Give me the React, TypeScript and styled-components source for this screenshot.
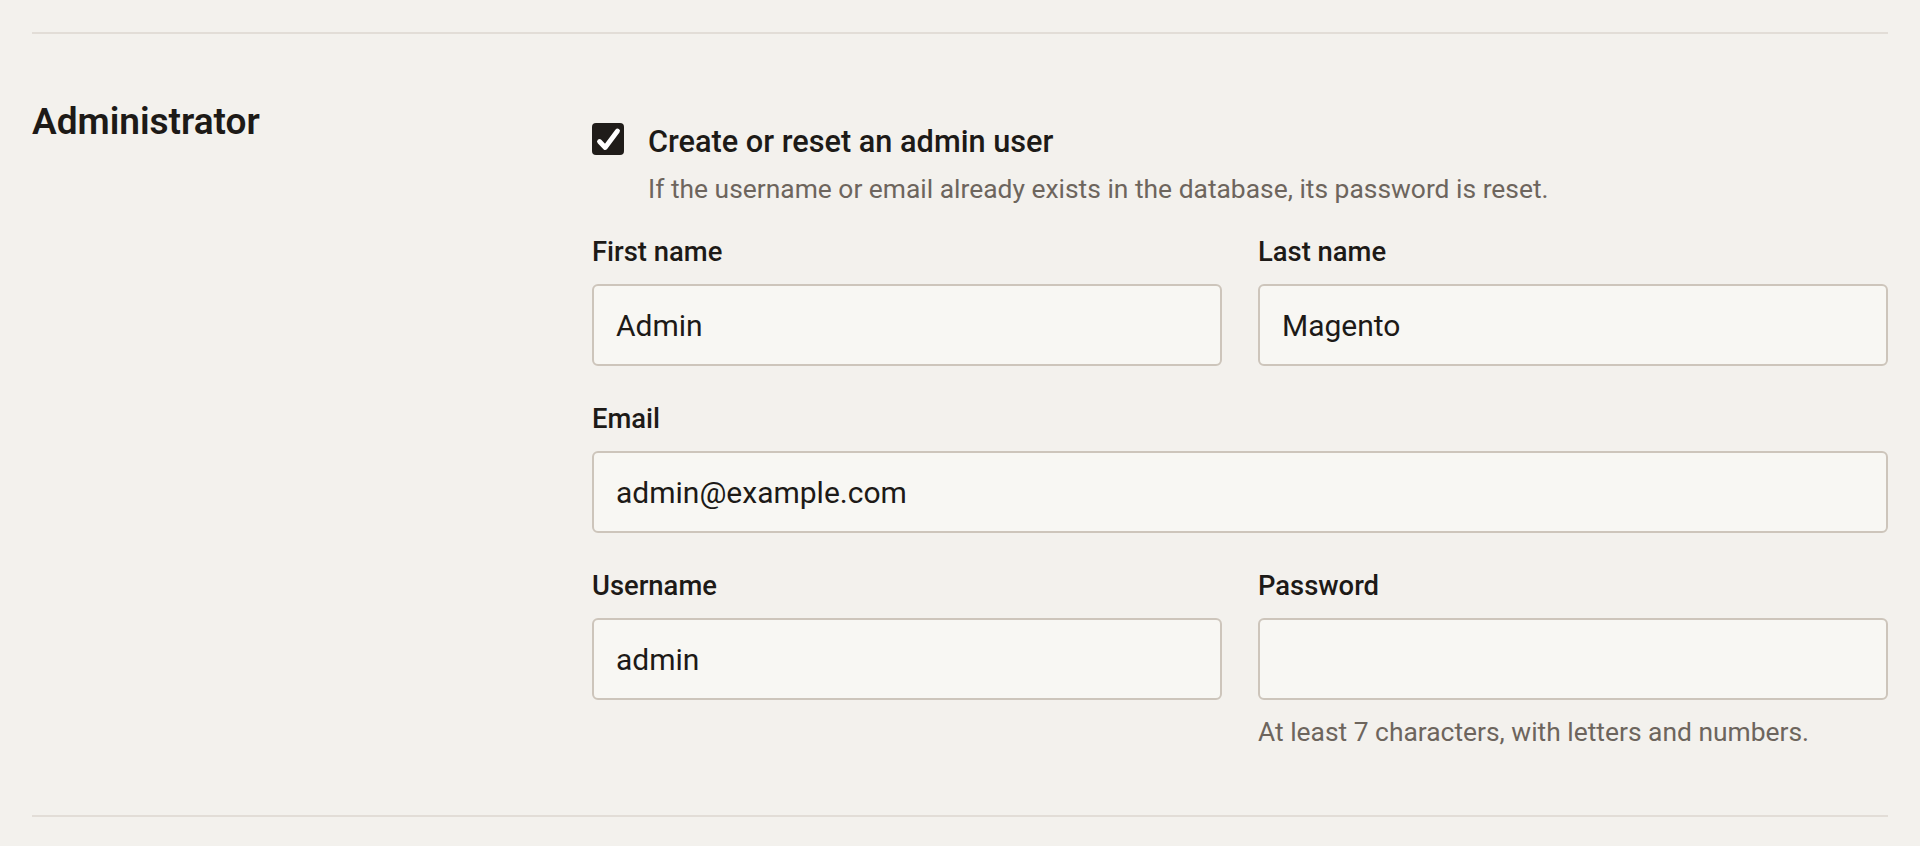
import React, { useState } from 'react'
import styled, { createGlobalStyle } from 'styled-components'

const GlobalStyle = createGlobalStyle`
  html, body {
    margin: 0;
    padding: 0;
    background: #f3f1ed;
  }
  body {
    font-family: Roboto, "Liberation Sans", sans-serif;
    color: #1d1a17;
  }
  * {
    box-sizing: border-box;
  }
`

const Page = styled.div`
  padding: 32px 32px 0;
`

const Divider = styled.hr`
  margin: 0;
  border: none;
  height: 2px;
  background: #e2ddd7;
`

const Section = styled.section`
  display: grid;
  grid-template-columns: 560px 1fr;
  padding: 65px 0 65px;
`

const Heading = styled.h2`
  margin: 0;
  font-size: 37px;
  line-height: 46px;
  font-weight: 600;
  color: #1d1a17;
`

const FormColumn = styled.div`
  display: flex;
  flex-direction: column;
  padding-top: 23px;
`

const CheckRow = styled.label`
  display: flex;
  align-items: flex-start;
  gap: 24px;
  cursor: pointer;
`

const Box = styled.span<{ checked: boolean }>`
  flex: none;
  display: flex;
  align-items: center;
  justify-content: center;
  width: 32px;
  height: 32px;
  margin-top: 1px;
  border-radius: 4px;
  background: ${(props) => (props.checked ? '#1f1c19' : '#f8f7f3')};
  border: ${(props) => (props.checked ? 'none' : '2px solid #cdc5bb')};
`

const CheckText = styled.span`
  font-size: 30.7px;
  line-height: 39px;
  font-weight: 500;
`

const Hint = styled.p<{ indent?: boolean }>`
  margin: ${(props) => (props.indent ? '10px 0 0 56px' : '0')};
  font-size: 26.4px;
  line-height: 36px;
  color: #6d655d;
`

const Fields = styled.div`
  display: grid;
  grid-template-columns: 1fr 1fr;
  column-gap: 36px;
  row-gap: 36px;
  margin-top: 28px;
`

const Field = styled.div<{ wide?: boolean }>`
  display: flex;
  flex-direction: column;
  grid-column: ${(props) => (props.wide ? '1 / -1' : 'auto')};
`

const Label = styled.span`
  font-size: 27.4px;
  line-height: 34px;
  font-weight: 500;
  margin-bottom: 15px;
`

const Input = styled.input`
  height: 82px;
  width: 100%;
  padding: 0 22px;
  border: 2px solid #cdc5bb;
  border-radius: 6px;
  background: #f8f7f3;
  font-family: Roboto, "Liberation Sans", sans-serif;
  font-size: 30px;
  color: #1d1a17;
  outline: none;
`

const FieldHint = styled(Hint)`
  margin-top: 14px;
`

const CheckIcon = () => (
  <svg width='32' height='32' viewBox='0 0 32 32'>
    <path
      d='M7.5 18.5 L13.2 24.5 L25.5 8'
      fill='none'
      stroke='#ffffff'
      strokeWidth='4.8'
      strokeLinecap='round'
      strokeLinejoin='round'
    />
  </svg>
)

export default function App () {
  const [createAdmin, setCreateAdmin] = useState<boolean>(true)
  const [firstName, setFirstName] = useState<string>('Admin')
  const [lastName, setLastName] = useState<string>('Magento')
  const [email, setEmail] = useState<string>('admin@example.com')
  const [username, setUsername] = useState<string>('admin')
  const [password, setPassword] = useState<string>('')

  return (
    <Page>
      <GlobalStyle />
      <Divider />
      <Section>
        <Heading>Administrator</Heading>
        <FormColumn>
          <CheckRow onClick={() => setCreateAdmin(!createAdmin)}>
            <Box checked={createAdmin}>{createAdmin && <CheckIcon />}</Box>
            <CheckText>Create or reset an admin user</CheckText>
          </CheckRow>
          <Hint indent>If the username or email already exists in the database, its password is reset.</Hint>
          <Fields>
            <Field>
              <Label>First name</Label>
              <Input value={firstName} onChange={(e) => setFirstName(e.target.value)} />
            </Field>
            <Field>
              <Label>Last name</Label>
              <Input value={lastName} onChange={(e) => setLastName(e.target.value)} />
            </Field>
            <Field wide>
              <Label>Email</Label>
              <Input value={email} onChange={(e) => setEmail(e.target.value)} />
            </Field>
            <Field>
              <Label>Username</Label>
              <Input value={username} onChange={(e) => setUsername(e.target.value)} />
            </Field>
            <Field>
              <Label>Password</Label>
              <Input type='password' value={password} onChange={(e) => setPassword(e.target.value)} />
              <FieldHint>At least 7 characters, with letters and numbers.</FieldHint>
            </Field>
          </Fields>
        </FormColumn>
      </Section>
      <Divider />
    </Page>
  )
}
